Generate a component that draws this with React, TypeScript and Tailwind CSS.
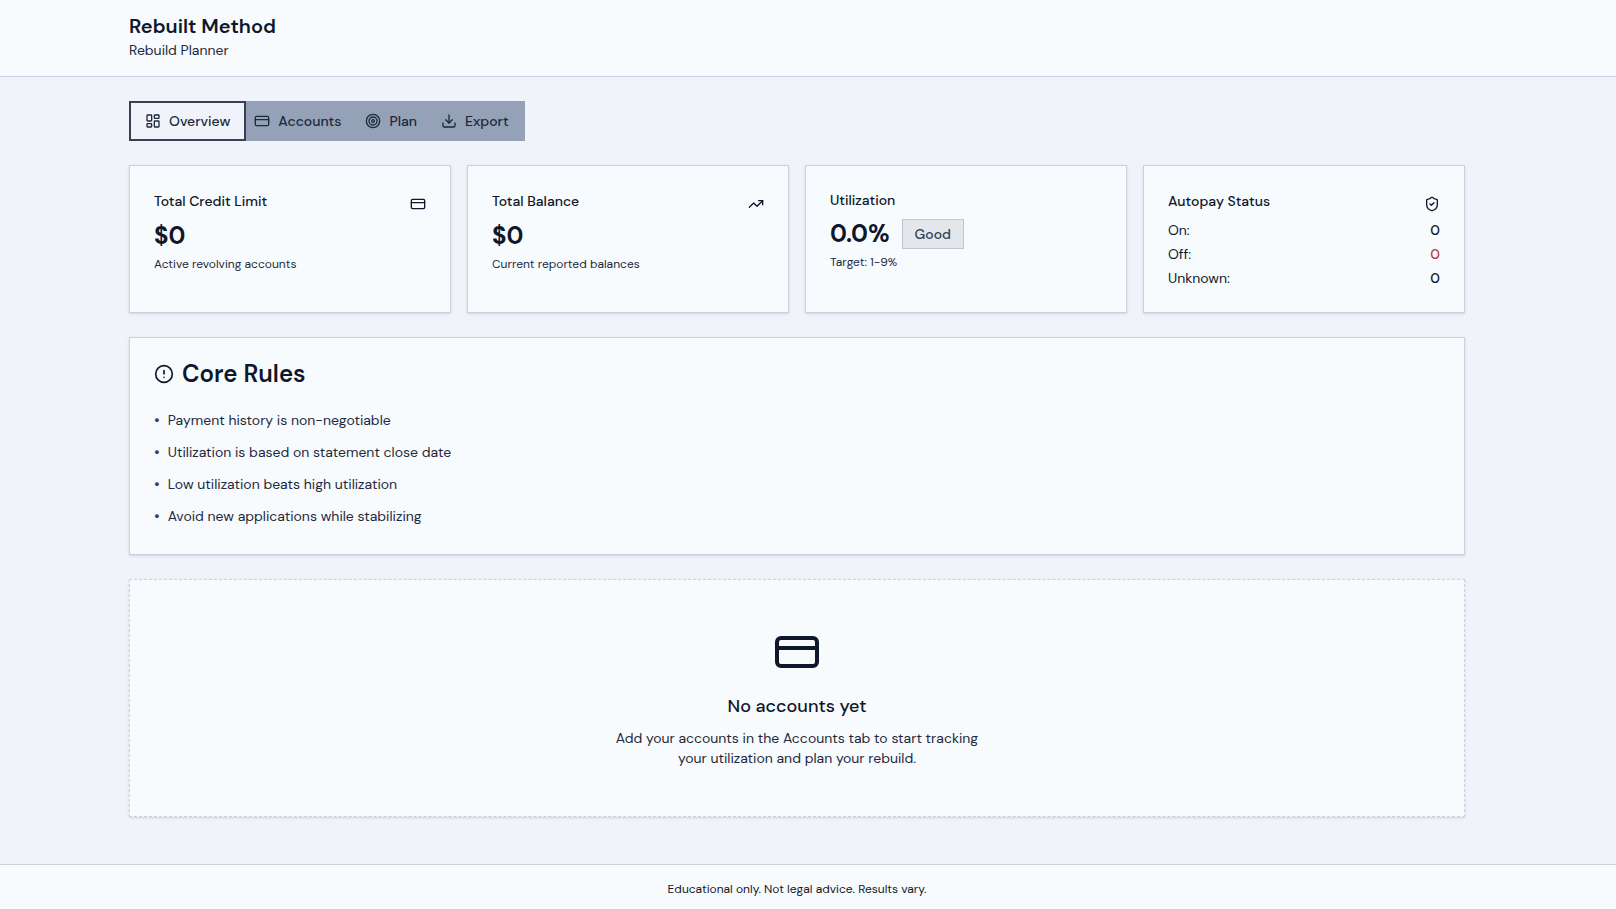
import { useState } from "react"
import type { ReactNode } from "react"
import { CircleAlert, CreditCard, Download, LayoutDashboard, ShieldCheck, Target, TrendingUp } from "lucide-react"
import type { LucideIcon } from "lucide-react"
import { clsx } from "clsx"

const tabs: { id: string; label: string; icon: LucideIcon }[] = [
  { id: "overview", label: "Overview", icon: LayoutDashboard },
  { id: "accounts", label: "Accounts", icon: CreditCard },
  { id: "plan", label: "Plan", icon: Target },
  { id: "export", label: "Export", icon: Download },
]

const rules = [
  "Payment history is non-negotiable",
  "Utilization is based on statement close date",
  "Low utilization beats high utilization",
  "Avoid new applications while stabilizing",
]

const autopay = [
  { label: "On:", count: 0, className: "text-slate-900" },
  { label: "Off:", count: 0, className: "text-[#b93c42]" },
  { label: "Unknown:", count: 0, className: "text-slate-900" },
]

function Container({ className, children }: { className?: string; children: ReactNode }) {
  return (
    <div className="pr-[22px]">
      <div className={clsx("mx-auto max-w-[1400px] px-8", className)}>{children}</div>
    </div>
  )
}

function Card({ className, children }: { className?: string; children: ReactNode }) {
  return <section className={clsx("border border-[#cbd0da] bg-[#f8fbfd] shadow-sm", className)}>{children}</section>
}

function CardHeader({ title, icon: Icon }: { title: string; icon: LucideIcon }) {
  return (
    <div className="flex h-[22px] items-center justify-between">
      <h2 className="text-sm font-medium">{title}</h2>
      <Icon className="size-4 self-end" />
    </div>
  )
}

function StatCard({ title, icon, value, caption }: { title: string; icon: LucideIcon; value: string; caption: string }) {
  return (
    <Card className="p-6">
      <CardHeader title={title} icon={icon} />
      <p className="mt-2 text-2xl font-bold">{value}</p>
      <p className="mt-1 text-xs text-slate-800">{caption}</p>
    </Card>
  )
}

export default function App() {
  const [activeTab, setActiveTab] = useState("overview")

  return (
    <div className="flex min-h-screen flex-col bg-[#f0f3fa] font-['DM_Sans','Inter',sans-serif] text-slate-900">
      <header className="border-b border-[#cbd0da] bg-[#f8fbfd]">
        <Container className="pt-3 pb-4">
          <h1 className="text-xl font-semibold">Rebuilt Method</h1>
          <p className="text-sm text-slate-800">Rebuild Planner</p>
        </Container>
      </header>

      <main className="flex-1">
        <Container className="flex flex-col gap-6 py-6">
          <div role="tablist" className="flex h-10 self-start bg-[#95a1b7] p-1">
            {tabs.map(({ id, label, icon: Icon }) => (
              <button
                key={id}
                type="button"
                role="tab"
                aria-selected={activeTab === id}
                onClick={() => setActiveTab(id)}
                className={clsx(
                  "flex items-center gap-2 px-3 text-sm font-medium text-slate-800",
                  activeTab === id && "bg-[#f0f3fa] ring-2 ring-[#3b3f51] ring-offset-2 ring-offset-[#f0f3fa]",
                )}
              >
                <Icon className="size-4" />
                {label}
              </button>
            ))}
          </div>

          <div className="grid gap-4 md:grid-cols-2 lg:grid-cols-4">
            <StatCard title="Total Credit Limit" icon={CreditCard} value="$0" caption="Active revolving accounts" />
            <StatCard title="Total Balance" icon={TrendingUp} value="$0" caption="Current reported balances" />
            <Card className="p-6">
              <h2 className="text-sm font-medium">Utilization</h2>
              <div className="mt-2 flex items-center gap-3">
                <p className="text-2xl font-bold">0.0%</p>
                <span className="border border-[#c1c5ce] bg-[#e3e6eb] px-3 py-1 text-sm font-medium text-slate-700">Good</span>
              </div>
              <p className="mt-1 text-xs text-slate-800">Target: 1-9%</p>
            </Card>
            <Card className="p-6">
              <CardHeader title="Autopay Status" icon={ShieldCheck} />
              <dl className="mt-2 flex flex-col gap-1 text-sm">
                {autopay.map((row) => (
                  <div key={row.label} className="flex justify-between">
                    <dt>{row.label}</dt>
                    <dd className={clsx("font-medium", row.className)}>{row.count}</dd>
                  </div>
                ))}
              </dl>
            </Card>
          </div>

          <Card className="px-6 pt-6 pb-7">
            <h2 className="flex items-center gap-2 text-2xl/6 font-semibold">
              <CircleAlert className="size-5" />
              Core Rules
            </h2>
            <ul className="mt-6 flex flex-col gap-3 text-sm text-slate-800">
              {rules.map((rule) => (
                <li key={rule} className="flex gap-2">
                  <span className="text-base/5 text-slate-700">•</span>
                  {rule}
                </li>
              ))}
            </ul>
          </Card>

          <Card className="flex flex-col items-center border-dashed p-12 text-center">
            <CreditCard className="size-12" />
            <h3 className="mt-4 text-lg/7 font-medium">No accounts yet</h3>
            <p className="mt-2 max-w-96 text-sm text-slate-800">
              Add your accounts in the Accounts tab to start tracking your utilization and plan your rebuild.
            </p>
          </Card>
        </Container>
      </main>

      <footer className="border-t border-[#cbd0da] bg-[#f8fbfd]">
        <Container className="pt-4 pb-3 text-center text-xs">Educational only. Not legal advice. Results vary.</Container>
      </footer>
    </div>
  )
}
